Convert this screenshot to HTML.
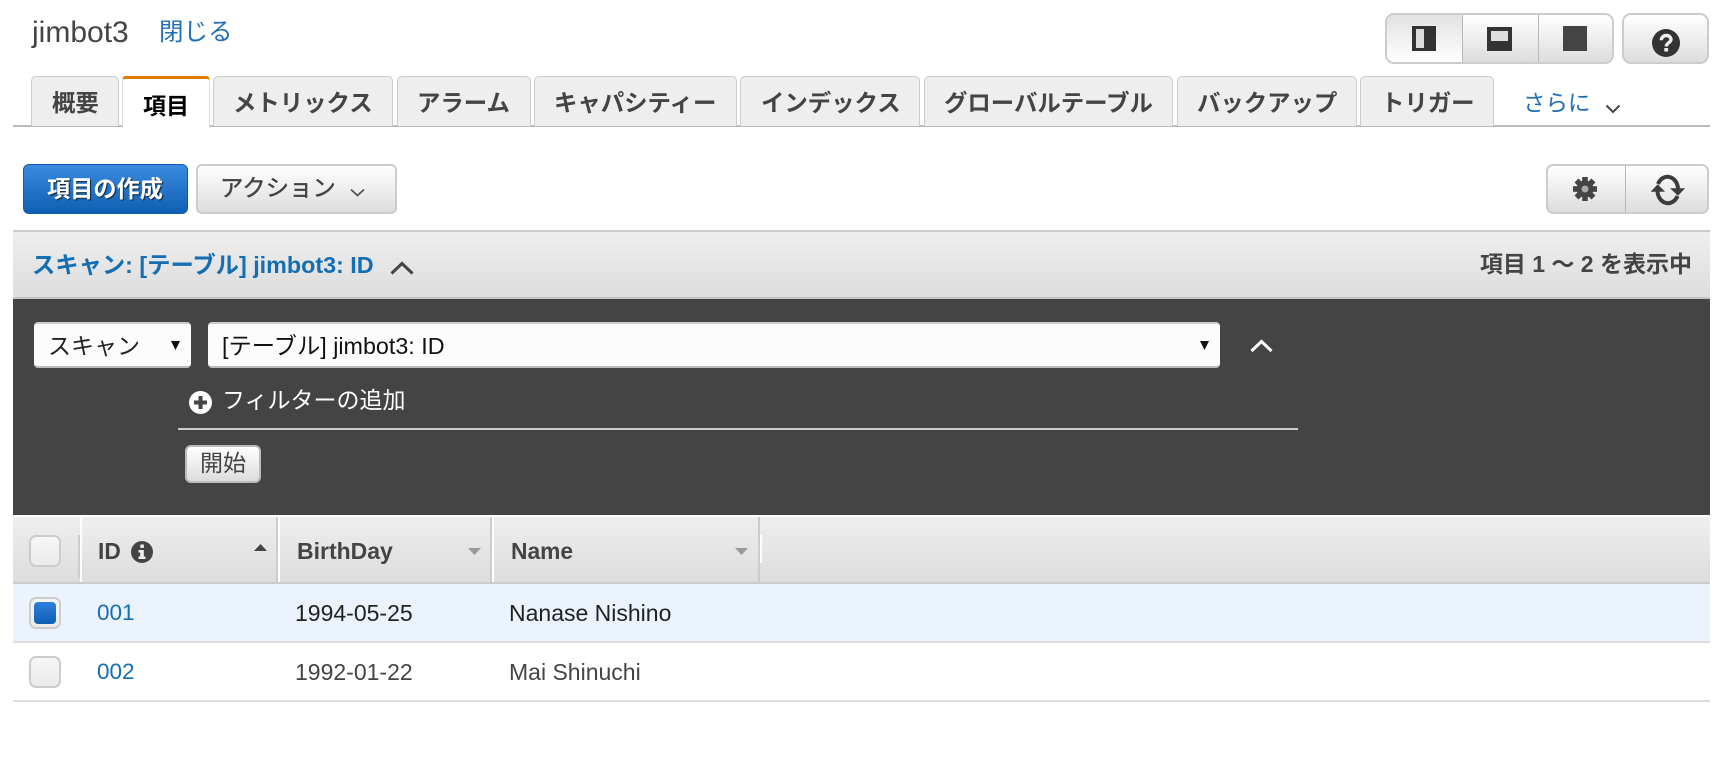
<!DOCTYPE html>
<html lang="ja"><head><meta charset="utf-8"><title>jimbot3</title>
<style>
html,body{margin:0;padding:0;background:#fff;width:1724px;height:775px;overflow:hidden}
body{position:relative;font-family:"Liberation Sans","Noto Sans CJK JP",sans-serif;color:#444}
.a{position:absolute;box-sizing:border-box}
.t{position:absolute;white-space:nowrap;line-height:30px;height:30px}
.b{font-weight:bold}
.tab{position:absolute;top:76px;height:50px;background:#eee;border:1px solid #ccc;border-bottom:0;border-radius:5px 5px 0 0;box-sizing:border-box}
.tt{position:absolute;top:88px;white-space:nowrap;line-height:30px;font-size:23.4px;font-weight:bold;color:#444;letter-spacing:0}
.btn{background:linear-gradient(#fff,#ddd);border:2px solid #ccc}
.cb{position:absolute;left:29px;width:32px;height:32px;border:2px solid #ccc;border-radius:7px;background:linear-gradient(#f6f6f6,#ebebeb);box-sizing:border-box}
.lnk{color:#146eb4}
svg{position:absolute;overflow:visible}
</style></head><body>

<div class="t" style="left:32px;top:18px;font-size:30px;line-height:30px;color:#444">jimbot3</div>
<div class="t" style="left:159px;top:18px;font-size:24.5px;color:#1f6fb8">閉じる</div>

<!-- view buttons -->
<div class="a btn" style="left:1385px;top:13px;width:229px;height:51px;border-radius:9px"></div>
<div class="a" style="left:1387px;top:15px;width:75px;height:47px;border-radius:7px 0 0 7px;background:linear-gradient(#e2e2e2,#fff)"></div>
<div class="a" style="left:1462px;top:15px;width:1px;height:47px;background:#b8b8b8"></div>
<div class="a" style="left:1538px;top:15px;width:1px;height:47px;background:#b8b8b8"></div>
<svg style="left:0;top:0" width="1724" height="80">
<rect x="1412" y="26" width="24" height="25" fill="#333"/><rect x="1416" y="29" width="8" height="19" fill="#ddd"/>
<rect x="1487" y="27" width="25" height="24" fill="#333"/><rect x="1491" y="31" width="17" height="10" fill="#ddd"/>
<rect x="1563" y="26" width="24" height="25" fill="#444"/>
</svg>
<div class="a btn" style="left:1622px;top:13px;width:87px;height:51px;border-radius:9px"></div>
<svg style="left:1652px;top:29px" width="28" height="28" viewBox="0 0 28 28"><circle cx="14" cy="14" r="14" fill="#333"/><path d="M9.300 11.300C9.300 8.300 11.700 6.500 14.200 6.500C17.200 6.500 19 8.400 19 10.500C19 13.600 14.400 13.800 14.200 17.500" fill="none" stroke="#eee" stroke-width="3.400"/><rect x="12.300" y="19" width="3.800" height="3.500" fill="#eee"/></svg>

<!-- tabs -->
<div class="a" style="left:13px;top:125px;width:1697px;height:2px;background:#bbb"></div>
<div class="tab" style="left:31px;width:88px"></div>
<div class="tab" style="left:213px;width:180px"></div>
<div class="tab" style="left:397px;width:134px"></div>
<div class="tab" style="left:534px;width:203px"></div>
<div class="tab" style="left:740px;width:180px"></div>
<div class="tab" style="left:924px;width:249px"></div>
<div class="tab" style="left:1177px;width:180px"></div>
<div class="tab" style="left:1360px;width:134px"></div>
<div class="a" style="left:122px;top:76px;width:88px;height:52px;background:#fff;border-top:3px solid #e07b00;border-left:1px solid #ddd;border-right:1px solid #ddd;border-radius:4px 4px 0 0"></div>
<div class="tt" style="left:52px">概要</div>
<div class="tt" style="left:143px;top:91px;color:#000;font-size:23px">項目</div>
<div class="tt" style="left:233px">メトリックス</div>
<div class="tt" style="left:417px">アラーム</div>
<div class="tt" style="left:554px">キャパシティー</div>
<div class="tt" style="left:761px">インデックス</div>
<div class="tt" style="left:944px">グローバルテーブル</div>
<div class="tt" style="left:1197px">バックアップ</div>
<div class="tt" style="left:1381px">トリガー</div>
<div class="t" style="left:1523px;top:89px;font-size:22.5px;color:#1f6fb8">さらに</div>
<svg style="left:1605px;top:104px" width="16" height="10"><path d="M1.500 1.500L8 8L14.500 1.500" fill="none" stroke="#444" stroke-width="2"/></svg>

<!-- action row -->
<div class="a" style="left:23px;top:164px;width:165px;height:50px;border-radius:6px;background:linear-gradient(#3a8ae0,#0f5fb3);border:1px solid #0f5cad"></div>
<div class="t b" style="left:47px;top:174px;font-size:23.2px;color:#fff;text-shadow:1px 1px 1px #123">項目の作成</div>
<div class="a btn" style="left:196px;top:164px;width:201px;height:50px;border-radius:6px"></div>
<div class="t" style="left:220px;top:173px;font-size:23.4px;color:#444;-webkit-text-stroke:.4px #444">アクション</div>
<svg style="left:350px;top:188px" width="15" height="9"><path d="M1 1.500L7.500 7.500L14 1.500" fill="none" stroke="#555" stroke-width="1.800"/></svg>

<div class="a btn" style="left:1546px;top:164px;width:163px;height:50px;border-radius:7px"></div>
<div class="a" style="left:1625px;top:166px;width:1px;height:46px;background:#b8b8b8"></div>
<svg style="left:1573px;top:177px" width="24" height="24" viewBox="-12 -12 24 24"><g fill="#444"><circle r="8.500"/><rect x="-2.800" y="-12" width="5.600" height="24"/><rect x="-2.800" y="-12" width="5.600" height="24" transform="rotate(45)"/><rect x="-2.800" y="-12" width="5.600" height="24" transform="rotate(90)"/><rect x="-2.800" y="-12" width="5.600" height="24" transform="rotate(135)"/></g><circle r="3.500" fill="#aaa"/></svg>
<svg style="left:1650px;top:174px" width="36" height="32" viewBox="0 0 36 32"><g fill="none" stroke="#3c3c3c" stroke-width="4"><path d="M8 10A10.500 12.500 0 0 1 28 15"/><path d="M27.500 22A10.500 12.500 0 0 1 7.500 17"/></g><path d="M20 14.300H35L28 21.700z" fill="#3c3c3c"/><path d="M.7 17.700H15L7.700 10.300z" fill="#3c3c3c"/></svg>

<!-- scan header -->
<div class="a" style="left:13px;top:230px;width:1697px;height:69px;background:linear-gradient(#eee,#ddd);border-top:2px solid #ccc;border-bottom:2px solid #c6c6c6"></div>
<div class="t b lnk" style="left:32px;top:250px;font-size:23.3px">スキャン: [テーブル] jimbot3: ID</div>
<svg style="left:390px;top:261px" width="24" height="14"><path d="M1.500 12.500L12 2.500L22.500 12.500" fill="none" stroke="#444" stroke-width="3"/></svg>
<div class="t b" style="right:32px;top:249px;font-size:23px;color:#444">項目 1 ～ 2 を表示中</div>

<!-- dark panel -->
<div class="a" style="left:13px;top:299px;width:1697px;height:216px;background:#444"></div>
<div class="a" style="left:34px;top:322px;width:157px;height:46px;background:#fcfcfc;border-top:2px solid #ccc;border-bottom:2px solid #bbb;border-radius:4px"></div>
<div class="t" style="left:48px;top:331px;font-size:23px;color:#222">スキャン</div>
<svg style="left:171px;top:341px" width="9" height="9"><path d="M0 0H9L4.500 9z" fill="#111"/></svg>
<div class="a" style="left:208px;top:322px;width:1012px;height:46px;background:#fcfcfc;border-top:2px solid #ccc;border-bottom:2px solid #bbb;border-radius:4px"></div>
<div class="t" style="left:222px;top:331px;font-size:23.3px;color:#111">[テーブル] jimbot3: ID</div>
<svg style="left:1200px;top:341px" width="9" height="9"><path d="M0 0H9L4.500 9z" fill="#111"/></svg>
<svg style="left:1250px;top:339px" width="23" height="14"><path d="M1.500 12L11.500 2.500L21.500 12" fill="none" stroke="#fff" stroke-width="3"/></svg>
<svg style="left:189px;top:391px" width="23" height="23" viewBox="0 0 23 23"><circle cx="11.500" cy="11.500" r="11.500" fill="#fff"/><path d="M9.500 5h4v4.500H18v4h-4.500V18h-4v-4.500H5v-4h4.500z" fill="#444"/></svg>
<div class="t" style="left:222px;top:385px;font-size:23px;color:#fff">フィルターの追加</div>
<div class="a" style="left:178px;top:428px;width:1120px;height:2px;background:#ccc"></div>
<div class="a btn" style="left:185px;top:445px;width:76px;height:38px;border-radius:6px;background:linear-gradient(#fff,#ddd);border-color:#bbb"></div>
<div class="t" style="left:200px;top:448px;font-size:23px;color:#444">開始</div>

<!-- table header -->
<div class="a" style="left:13px;top:517px;width:1697px;height:67px;background:linear-gradient(#eee,#ddd);border-bottom:2px solid #ccc"></div>
<div class="a" style="left:78px;top:535px;width:2px;height:43px;background:#ccc"></div>
<div class="a" style="left:80px;top:517px;width:2px;height:65px;background:#fff"></div>
<div class="a" style="left:276px;top:517px;width:2px;height:65px;background:#ccc"></div>
<div class="a" style="left:278px;top:517px;width:2px;height:65px;background:#fff"></div>
<div class="a" style="left:490px;top:517px;width:2px;height:65px;background:#ccc"></div>
<div class="a" style="left:492px;top:517px;width:2px;height:65px;background:#fff"></div>
<div class="a" style="left:758px;top:517px;width:2px;height:65px;background:#ccc"></div>
<div class="a" style="left:760px;top:535px;width:2px;height:28px;background:#fff"></div>
<div class="cb" style="top:535px"></div>
<div class="t b" style="left:98px;top:536px;font-size:22.8px">ID</div>
<svg style="left:131px;top:541px" width="22" height="22" viewBox="0 0 22 22"><circle cx="11" cy="11" r="11" fill="#444"/><rect x="9.300" y="3.500" width="3.600" height="3.400" fill="#eee"/><path d="M7.500 9H12.800V15.500H14.500V18H7.500V15.500H9.200V11.500H7.500z" fill="#eee"/></svg>
<svg style="left:254px;top:544px" width="13" height="7"><path d="M0 7L6.500 0L13 7z" fill="#444"/></svg>
<div class="t b" style="left:297px;top:536px;font-size:23px">BirthDay</div>
<svg style="left:468px;top:548px" width="13" height="7"><path d="M0 0H13L6.500 7z" fill="#999"/></svg>
<div class="t b" style="left:511px;top:536px;font-size:22.8px">Name</div>
<svg style="left:735px;top:548px" width="13" height="7"><path d="M0 0H13L6.500 7z" fill="#999"/></svg>

<!-- rows -->
<div class="a" style="left:13px;top:584px;width:1697px;height:59px;background:#eaf3fe;border-bottom:2px solid #ddd"></div>
<div class="a" style="left:13px;top:643px;width:1697px;height:59px;background:#fff;border-bottom:2px solid #ddd"></div>
<div class="cb" style="top:597px"></div>
<div class="a" style="left:34px;top:602px;width:22px;height:22px;border-radius:4px;background:linear-gradient(#2f80dc,#0f5fb5)"></div>
<div class="t lnk" style="left:97px;top:598px;font-size:22.5px">001</div>
<div class="t" style="left:295px;top:598px;font-size:23px;color:#222">1994-05-25</div>
<div class="t" style="left:509px;top:598px;font-size:23px;color:#222">Nanase Nishino</div>
<div class="cb" style="top:656px"></div>
<div class="t lnk" style="left:97px;top:657px;font-size:22.5px">002</div>
<div class="t" style="left:295px;top:657px;font-size:23px">1992-01-22</div>
<div class="t" style="left:509px;top:657px;font-size:23px">Mai Shinuchi</div>
</body></html>
